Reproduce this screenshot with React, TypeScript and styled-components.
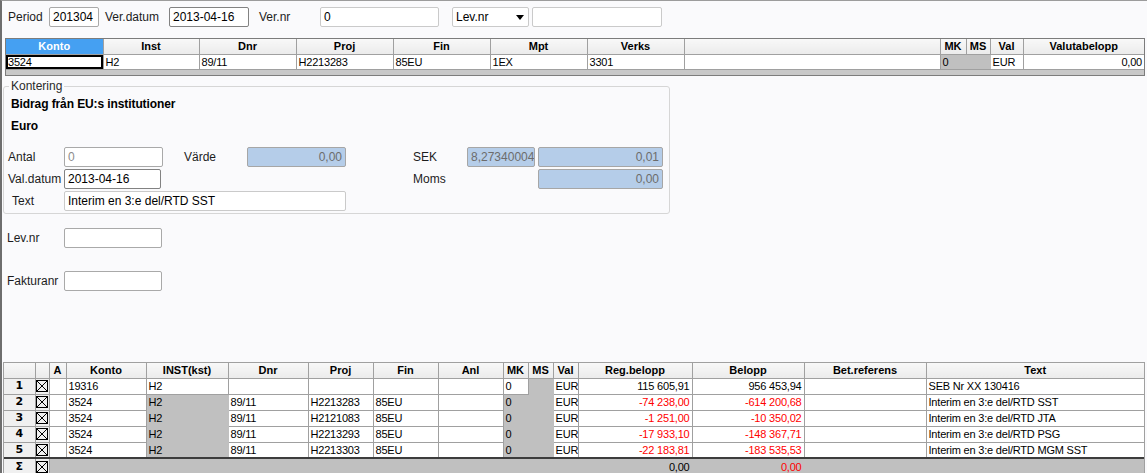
import React from 'react'
import styled, { createGlobalStyle, css } from 'styled-components'

const GlobalStyle = createGlobalStyle`
  html, body {
    margin: 0;
    padding: 0;
    background: #fafafc;
  }
  body {
    font-family: "Liberation Sans", Arial, sans-serif;
    font-size: 12px;
    color: #000;
  }
  * {
    box-sizing: border-box;
  }
`

const Window = styled.div`
  width: 1147px;
  height: 473px;
  overflow: hidden;
  display: flex;
  flex-direction: column;
  background: #fafafc;
  border-left: 2px solid #6e6e6e;
  border-top: 1px solid #9c9c9c;
`

const TopBar = styled.div`
  display: flex;
  align-items: center;
  height: 20px;
  margin: 6px 0 0 6px;
`

const Label = styled.span<{ $w?: number; $indent?: number; $ml?: number }>`
  ${(p) => p.$w !== undefined && css`width: ${p.$w}px;`}
  flex: none;
  margin-left: ${(p) => p.$ml ?? 0}px;
  padding-left: ${(p) => p.$indent ?? 0}px;
  font-size: 12px;
  line-height: 20px;
  white-space: nowrap;
  color: #1c1c1c;
`

type BoxTone = 'plain' | 'light' | 'dark' | 'readonly' | 'disabled'

const boxTones: Record<BoxTone, string> = {
  plain: 'background: #fff; border-color: #a9a9a9; color: #000;',
  light: 'background: #fff; border-color: #cacaca; color: #000;',
  dark: 'background: #fff; border-color: #828282; color: #000;',
  readonly: 'background: #b5cde9; border-color: #a6a6a6; color: #6c6c6c;',
  disabled: 'background: #fff; border-color: #a9a9a9; color: #8c8c8c;',
}

const Box = styled.div<{ $w?: number; $ml?: number; $tone?: BoxTone; $right?: boolean }>`
  ${(p) => p.$w !== undefined && css`width: ${p.$w}px;`}
  flex: none;
  height: 20px;
  margin-left: ${(p) => p.$ml ?? 0}px;
  padding: 0 3px;
  border: 1px solid;
  border-radius: 2px;
  ${(p) => boxTones[p.$tone ?? 'plain']}
  font-size: 12px;
  line-height: 18px;
  text-align: ${(p) => (p.$right ? 'right' : 'left')};
  white-space: nowrap;
  overflow: hidden;
`

const Select = styled.div<{ $w: number; $ml: number }>`
  width: ${(p) => p.$w}px;
  margin-left: ${(p) => p.$ml}px;
  height: 20px;
  flex: none;
  display: flex;
  align-items: center;
  justify-content: space-between;
  padding: 0 4px 0 3px;
  background: #fff;
  border: 1px solid #cacaca;
  border-radius: 2px;
  font-size: 12px;
`

const GridFrame = styled.div<{ $ml: number; $mt: number; $w: number }>`
  width: ${(p) => p.$w}px;
  margin: ${(p) => p.$mt}px 0 0 ${(p) => p.$ml}px;
  border: 1px solid #7c7c7c;
  background: #fff;
  flex: none;
`

const BottomFrame = styled(GridFrame)`
  border-color: #a0a0a0;
  border-bottom: none;
`

const Table = styled.table`
  width: 100%;
  border-collapse: collapse;
  border-style: hidden;
  table-layout: fixed;
  font-size: 11px;
`

const Th = styled.th<{ $selected?: boolean }>`
  height: 15px;
  padding: 0;
  border: 1px solid #a0a0a0;
  background: ${(p) => (p.$selected ? '#45a0f2' : 'linear-gradient(#f8f8f8, #ebebeb)')};
  color: ${(p) => (p.$selected ? '#fff' : '#000')};
  font-weight: bold;
  font-size: 11px;
  line-height: 13px;
  text-align: center;
  white-space: nowrap;
  overflow: hidden;
`

type CellTone = 'white' | 'gray' | 'head' | 'sum'

const cellBg: Record<CellTone, string> = {
  white: '#fff',
  gray: '#c0c0c0',
  head: '#f0f0f0',
  sum: '#c0c0c0',
}

const Td = styled.td<{ $tone?: CellTone; $right?: boolean; $red?: boolean; $focus?: boolean; $h?: number }>`
  height: ${(p) => p.$h ?? 16}px;
  padding: 0 2px;
  border: 1px solid ${(p) => (p.$tone === 'gray' || p.$tone === 'sum' ? '#c0c0c0' : '#a0a0a0')};
  background: ${(p) => cellBg[p.$tone ?? 'white']};
  color: ${(p) => (p.$red ? '#ff0000' : '#000')};
  text-align: ${(p) => (p.$right ? 'right' : 'left')};
  font-size: 11px;
  letter-spacing: -0.2px;
  line-height: 14px;
  white-space: nowrap;
  overflow: hidden;
  ${(p) => p.$focus && css`box-shadow: inset 0 0 0 2px #000;`}
`

const RowHead = styled(Td)`
  padding: 0;
  text-align: center;
  font-family: "DejaVu Sans", sans-serif;
  font-weight: bold;
  font-size: 11px;
  letter-spacing: 0;
`

const SumRow = styled.tr`
  & > td {
    border-top: 2px solid #3c3c3c;
  }
`

const ScrollBand = styled.div`
  height: 6px;
  background: #c8c8c8;
  border-top: 1px solid #a0a0a0;
`

const Fieldset = styled.fieldset`
  width: 667px;
  margin: 3px 0 0 1px;
  padding: 0 0 2px 0;
  border: 1px solid #d6d6d6;
  border-radius: 3px;
  flex: none;
`

const Legend = styled.legend`
  margin-left: 5px;
  padding: 0 2px;
  font-size: 12px;
  line-height: 14px;
  color: #2a2a2a;
`

const Heading = styled.div`
  padding-left: 7px;
  margin-top: 1px;
  font-weight: bold;
  font-size: 12px;
  letter-spacing: -0.1px;
  line-height: 21px;
`

const FormGrid = styled.div`
  display: grid;
  grid-template-columns: 56px 99px 21px 63px 99px 67px 54px 68px 3px 125px;
  grid-auto-rows: 20px;
  row-gap: 2px;
  margin-top: 10px;
  padding-left: 4px;
`

const Cell = styled.div<{ $col: string }>`
  grid-column: ${(p) => p.$col};
`

const ExtraGrid = styled.div`
  display: grid;
  grid-template-columns: 57px 98px;
  grid-auto-rows: 20px;
  row-gap: 23px;
  margin: 14px 0 0 5px;
  flex: none;
`

const Checkbox = () => (
  <svg width="12" height="12" viewBox="0 0 12 12" style={{ display: 'block', margin: '0 auto' }}>
    <rect x="0.5" y="0.5" width="11" height="11" fill="none" stroke="#000" />
    <path d="M1 1L11 11M11 1L1 11" stroke="#000" strokeWidth="1" />
  </svg>
)

const Caret = () => (
  <svg width="8" height="5" viewBox="0 0 8 5">
    <path d="M0 0H8L4 5Z" fill="#000" />
  </svg>
)

const topCols = [97, 96, 97, 97, 97, 97, 97, 256, 26, 24, 33, 121]
const topHeads = ['Konto', 'Inst', 'Dnr', 'Proj', 'Fin', 'Mpt', 'Verks', '', 'MK', 'MS', 'Val', 'Valutabelopp']

const bottomCols = [31, 14, 17, 80, 82, 80, 65, 65, 65, 25, 25, 25, 114, 112, 122, 218]
const bottomHeads = ['', '', 'A', 'Konto', 'INST(kst)', 'Dnr', 'Proj', 'Fin', 'Anl', 'MK', 'MS', 'Val', 'Reg.belopp', 'Belopp', 'Bet.referens', 'Text']

interface Row {
  n: string
  konto: string
  dnr: string
  proj: string
  fin: string
  locked: boolean
  reg: string
  bel: string
  text: string
}

const rows: Row[] = [
  { n: '1', konto: '19316', dnr: '', proj: '', fin: '', locked: false, reg: '115 605,91', bel: '956 453,94', text: 'SEB Nr XX 130416' },
  { n: '2', konto: '3524', dnr: '89/11', proj: 'H2213283', fin: '85EU', locked: true, reg: '-74 238,00', bel: '-614 200,68', text: 'Interim en 3:e del/RTD SST' },
  { n: '3', konto: '3524', dnr: '89/11', proj: 'H2121083', fin: '85EU', locked: true, reg: '-1 251,00', bel: '-10 350,02', text: 'Interim en 3:e del/RTD JTA' },
  { n: '4', konto: '3524', dnr: '89/11', proj: 'H2213293', fin: '85EU', locked: true, reg: '-17 933,10', bel: '-148 367,71', text: 'Interim en 3:e del/RTD PSG' },
  { n: '5', konto: '3524', dnr: '89/11', proj: 'H2213303', fin: '85EU', locked: true, reg: '-22 183,81', bel: '-183 535,53', text: 'Interim en 3:e del/RTD MGM SST' },
]

export default function App() {
  return (
    <>
      <GlobalStyle />
      <Window>
        <TopBar>
          <Label $w={41}>Period</Label>
          <Box $w={50} $tone="plain">201304</Box>
          <Label $w={64} $ml={6}>Ver.datum</Label>
          <Box $w={80} $tone="dark">2013-04-16</Box>
          <Label $w={61} $ml={10}>Ver.nr</Label>
          <Box $w={119} $tone="light">0</Box>
          <Select $w={77} $ml={13}>
            Lev.nr
            <Caret />
          </Select>
          <Box $w={130} $ml={3} $tone="light" />
        </TopBar>

        <GridFrame $ml={3} $mt={11} $w={1140}>
          <Table>
            <colgroup>
              {topCols.map((w, i) => (
                <col key={i} style={{ width: w }} />
              ))}
            </colgroup>
            <thead>
              <tr>
                {topHeads.map((h, i) => (
                  <Th key={i} $selected={i === 0}>
                    {h}
                  </Th>
                ))}
              </tr>
            </thead>
            <tbody>
              <tr>
                <Td $h={15} $focus>3524</Td>
                <Td $h={15}>H2</Td>
                <Td $h={15}>89/11</Td>
                <Td $h={15}>H2213283</Td>
                <Td $h={15}>85EU</Td>
                <Td $h={15}>1EX</Td>
                <Td $h={15}>3301</Td>
                <Td $h={15} />
                <Td $h={15} $tone="gray">0</Td>
                <Td $h={15} $tone="gray" />
                <Td $h={15}>EUR</Td>
                <Td $h={15} $right>0,00</Td>
              </tr>
            </tbody>
          </Table>
          <ScrollBand />
        </GridFrame>

        <Fieldset>
          <Legend>Kontering</Legend>
          <Heading>Bidrag från EU:s institutioner</Heading>
          <Heading>Euro</Heading>
          <FormGrid>
            <Cell $col="1"><Label>Antal</Label></Cell>
            <Cell $col="2"><Box $tone="disabled">0</Box></Cell>
            <Cell $col="4"><Label>Värde</Label></Cell>
            <Cell $col="5"><Box $tone="readonly" $right>0,00</Box></Cell>
            <Cell $col="7"><Label>SEK</Label></Cell>
            <Cell $col="8"><Box $tone="readonly" $right>8,27340004</Box></Cell>
            <Cell $col="10"><Box $tone="readonly" $right>0,01</Box></Cell>

            <Cell $col="1"><Label>Val.datum</Label></Cell>
            <Cell $col="2"><Box $w={97} $tone="dark">2013-04-16</Box></Cell>
            <Cell $col="7"><Label>Moms</Label></Cell>
            <Cell $col="10"><Box $tone="readonly" $right>0,00</Box></Cell>

            <Cell $col="1"><Label $indent={4}>Text</Label></Cell>
            <Cell $col="2 / 6"><Box $tone="light">Interim en 3:e del/RTD SST</Box></Cell>
          </FormGrid>
        </Fieldset>

        <ExtraGrid>
          <Label>Lev.nr</Label>
          <Box $tone="plain" />
          <Label>Fakturanr</Label>
          <Box $tone="plain" />
        </ExtraGrid>

        <BottomFrame $ml={1} $mt={71} $w={1142}>
          <Table>
            <colgroup>
              {bottomCols.map((w, i) => (
                <col key={i} style={{ width: w }} />
              ))}
            </colgroup>
            <thead>
              <tr>
                {bottomHeads.map((h, i) => (
                  <Th key={i}>{h}</Th>
                ))}
              </tr>
            </thead>
            <tbody>
              {rows.map((r) => (
                <tr key={r.n}>
                  <RowHead $tone="head">{r.n}</RowHead>
                  <Td $tone="head" style={{ padding: 0 }}>
                    <Checkbox />
                  </Td>
                  <Td />
                  <Td>{r.konto}</Td>
                  <Td $tone={r.locked ? 'gray' : 'white'}>H2</Td>
                  <Td>{r.dnr}</Td>
                  <Td>{r.proj}</Td>
                  <Td>{r.fin}</Td>
                  <Td />
                  <Td $tone={r.locked ? 'gray' : 'white'}>0</Td>
                  <Td $tone="gray" />
                  <Td>EUR</Td>
                  <Td $right $red={r.locked}>{r.reg}</Td>
                  <Td $right $red={r.locked}>{r.bel}</Td>
                  <Td />
                  <Td>{r.text}</Td>
                </tr>
              ))}
              <SumRow>
                <RowHead $tone="head">Σ</RowHead>
                <Td $tone="head" style={{ padding: 0 }}>
                  <Checkbox />
                </Td>
                <Td $tone="sum" colSpan={10} />
                <Td $tone="sum" $right>0,00</Td>
                <Td $tone="sum" $right $red>0,00</Td>
                <Td $tone="sum" colSpan={2} />
              </SumRow>
            </tbody>
          </Table>
        </BottomFrame>
      </Window>
    </>
  )
}
